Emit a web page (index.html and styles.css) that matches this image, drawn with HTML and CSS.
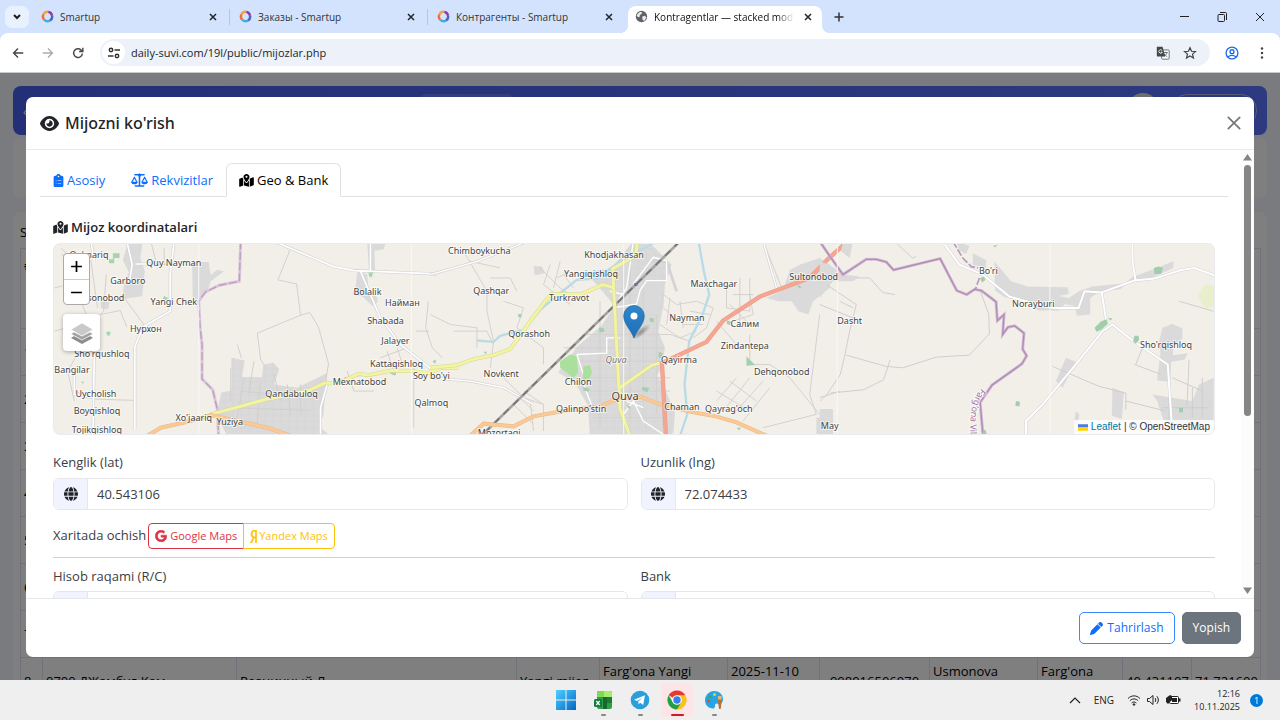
FILE: index.html
```html
<!DOCTYPE html>
<html lang="uz">
<head>
  <meta charset="UTF-8" />
  <meta name="viewport" content="width=device-width, initial-scale=1.0"/>
  <title>Kontragentlar — stacked modal</title>
  <link rel="stylesheet" href="styles.css">
</head>
<body>
  <svg class="sprite" aria-hidden="true">
    <defs>
      <symbol id="i-logo" viewBox="0 0 16 16">
        <g fill="none" stroke-width="3">
          <path d="M9 2.300A5.700 5.700 0 0 0 3 5.500" stroke="#f2a33a"/>
          <path d="M3 5.500A5.700 5.700 0 0 0 4 12" stroke="#ee6f3c"/>
          <path d="M4 12A5.700 5.700 0 0 0 11 13" stroke="#36b3d6"/>
          <path d="M11 13A5.700 5.700 0 0 0 13.600 7" stroke="#4a63c8"/>
          <path d="M13.600 7A5.700 5.700 0 0 0 9 2.300" stroke="#8a3fa0"/>
        </g>
      </symbol>
      <symbol id="i-x" viewBox="0 0 16 16"><path d="M4 4l8 8M12 4l-8 8" stroke="currentColor" fill="none"/></symbol>
      <symbol id="i-map" viewBox="0 0 576 512"><path fill="currentColor" d="M408 120c0 54.600-73.100 151.900-105.200 192c-7.700 9.600-22 9.600-29.600 0C241.100 271.900 168 174.600 168 120C168 53.700 221.700 0 288 0s120 53.700 120 120zm8 80.400c3.500-6.900 6.700-13.800 9.600-20.600c.5-1.200 1-2.500 1.500-3.700l116-46.400C558.900 123.400 576 135 576 152V422.800c0 9.800-6 18.600-15.100 22.300L416 503V200.400zM137.600 138.300c2.400 14.100 7.200 28.300 12.800 41.500c2.900 6.800 6.100 13.700 9.600 20.600V451.800L32.900 502.700C17.100 509 0 497.400 0 480.400V209.600c0-9.800 6-18.600 15.100-22.300l122.600-49zM327.800 332c13.900-17.400 35.700-45.700 56.200-77V504.300L192 449.400V255c20.500 31.300 42.300 59.600 56.200 77c20.500 25.600 59.100 25.600 79.600 0zM288 152a40 40 0 1 0 0-80 40 40 0 1 0 0 80z"/></symbol>
      <symbol id="i-globe" viewBox="0 0 512 512"><path fill="currentColor" d="M352 256c0 22.200-1.200 43.600-3.300 64H163.300c-2.200-20.400-3.300-41.800-3.300-64s1.200-43.600 3.300-64H348.700c2.200 20.400 3.300 41.800 3.300 64zm28.800-64H503.900c5.300 20.500 8.100 41.900 8.100 64s-2.800 43.500-8.100 64H380.800c2.100-20.600 3.200-42 3.200-64s-1.100-43.400-3.200-64zm112.600-32H376.700c-10-63.900-29.800-117.400-55.300-151.600c78.300 20.700 142 77.500 171.900 151.600zm-149.100 0H167.700c6.100-36.400 15.500-68.600 27-94.700c10.500-23.600 22.200-40.700 33.500-51.500C239.400 3.200 248.700 0 256 0s16.600 3.200 27.800 13.800c11.300 10.800 23 27.900 33.500 51.500c11.600 26 20.900 58.200 27 94.700zm-209 0H18.600C48.600 85.900 112.200 29.100 190.600 8.400C165.100 42.600 145.300 96.100 135.300 160zM8.100 192H131.200c-2.100 20.600-3.200 42-3.200 64s1.100 43.400 3.200 64H8.100C2.800 299.500 0 278.100 0 256s2.800-43.500 8.100-64zM194.700 446.600c-11.600-26-20.900-58.200-27-94.600H344.300c-6.100 36.400-15.500 68.600-27 94.600c-10.500 23.600-22.200 40.700-33.500 51.500C272.600 508.800 263.300 512 256 512s-16.600-3.200-27.800-13.800c-11.300-10.800-23-27.900-33.500-51.500zM135.300 352c10 63.900 29.800 117.400 55.300 151.600C112.200 482.900 48.600 426.100 18.600 352H135.300zm358.100 0c-30 74.100-93.600 130.900-171.900 151.600c25.500-34.200 45.200-87.700 55.300-151.600H493.400z"/></symbol>
    </defs>
  </svg>

  <!-- Brauzer -->
  <header class="browser">
    <div class="tab-strip">
      <button class="tab-search" aria-label="Search tabs"><svg width="10" height="10" viewBox="0 0 10 10"><path d="M2 3l3 3 3-3" fill="none" stroke="#1f1f1f" stroke-width="2"/></svg></button>
      <div class="tab">
        <svg class="favicon"><use href="#i-logo"/></svg><span class="tab-title">Smartup</span>
        <button class="tab-close" aria-label="Close"><svg><use href="#i-x"/></svg></button>
      </div>
      <div class="tab">
        <svg class="favicon"><use href="#i-logo"/></svg><span class="tab-title">Заказы - Smartup</span>
        <button class="tab-close" aria-label="Close"><svg><use href="#i-x"/></svg></button>
      </div>
      <div class="tab tab-last">
        <svg class="favicon"><use href="#i-logo"/></svg><span class="tab-title">Контрагенты - Smartup</span>
        <button class="tab-close" aria-label="Close"><svg><use href="#i-x"/></svg></button>
      </div>
      <div class="tab tab-active">
        <svg class="favicon" viewBox="0 0 16 16"><circle cx="8" cy="8" r="7" fill="#5f6368"/><path d="M3 5c2-3 5-3 6-2l-1 2-2 1v2L4 9 2 7zM9 8l3-1 2 2-2 4-2 0-1-2z" fill="#e8eaed"/></svg><span class="tab-title">Kontragentlar — stacked modal</span>
        <button class="tab-close" aria-label="Close"><svg><use href="#i-x"/></svg></button>
      </div>
      <button class="new-tab" aria-label="New tab"><svg width="12" height="12" viewBox="0 0 12 12"><path d="M6 1.500v9M1.500 6h9" stroke="#333" stroke-width="1.500"/></svg></button>
      <div class="window-controls">
        <button aria-label="Minimize"><svg viewBox="0 0 12 12"><path d="M2 5.500h9" stroke="#222"/></svg></button>
        <button aria-label="Restore"><svg viewBox="0 0 12 12" fill="none" stroke="#222"><rect x="2" y="3.500" width="6.500" height="7" rx="1"/><path d="M4 1.500h5.500a1 1 0 0 1 1 1V9"/></svg></button>
        <button aria-label="Close window"><svg viewBox="0 0 12 12"><path d="M2 2l8 8M10 2l-8 8" stroke="#222"/></svg></button>
      </div>
    </div>
    <div class="toolbar">
      <button class="tool" aria-label="Back"><svg viewBox="0 0 16 16"><path d="M14 8H3M8 3L3 8l5 5" fill="none" stroke="#444746" stroke-width="1.600"/></svg></button>
      <button class="tool" aria-label="Forward"><svg viewBox="0 0 16 16"><path d="M2 8h11M8 3l5 5-5 5" fill="none" stroke="#a9acaf" stroke-width="1.600"/></svg></button>
      <button class="tool" aria-label="Reload"><svg viewBox="0 0 16 16"><path d="M13 8.500A5 5 0 1 1 11.500 4.500L13 6M13.500 2v4.300H9.300" fill="none" stroke="#444746" stroke-width="1.600"/></svg></button>
      <div class="omnibox">
        <button class="site-info" aria-label="Site information"><svg width="12" height="12" viewBox="0 0 12 12" fill="none" stroke="#333" stroke-width="1.500"><circle cx="3" cy="3" r="1.700"/><path d="M6.500 3H12M0 9h5.500"/><circle cx="9" cy="9" r="1.700"/></svg></button>
        <input class="url" type="text" aria-label="Address" value="daily-suvi.com/19l/public/mijozlar.php">
        <button class="tool" aria-label="Translate"><svg viewBox="0 0 16 16"><rect x="6.500" y="4.500" width="8.500" height="10.500" rx="1" fill="#fff" stroke="#5f6368"/><path d="M8.500 7.500h5M11 6.500v1M12.500 7.500c-.5 2-2 3.500-3.500 4.500M9.500 9c.5 1.200 1.800 2.500 3.300 3" fill="none" stroke="#5f6368"/><path d="M1 1h6.500l3 11H2a1 1 0 0 1-1-1z" fill="#444746"/><path d="M7 5.200A2 2 0 1 0 7.200 7H5.500" fill="none" stroke="#fff"/></svg></button>
        <button class="tool" aria-label="Bookmark"><svg viewBox="0 0 16 16"><path d="M8 2l1.800 4 4.400.4-3.300 2.900 1 4.300L8 11.300l-3.900 2.300 1-4.300L1.800 6.400 6.200 6z" fill="none" stroke="#444746" stroke-width="1.400"/></svg></button>
      </div>
      <button class="tool" aria-label="Profile"><svg viewBox="0 0 16 16" fill="none" stroke="#1a6ce8" stroke-width="1.500"><circle cx="8" cy="8" r="6.700"/><circle cx="8" cy="6.500" r="2.200"/><path d="M3.500 12.500c2.500-2.300 6.500-2.300 9 0"/></svg></button>
      <button class="tool" aria-label="Menu"><svg viewBox="0 0 16 16" fill="#444746"><circle cx="8" cy="3" r="1.400"/><circle cx="8" cy="8" r="1.400"/><circle cx="8" cy="13" r="1.400"/></svg></button>
    </div>
  </header>

  <div class="page">
    <nav class="site-nav">
      <span class="nav-brand">‹</span>
      <span class="nav-chip"></span>
      <span class="nav-avatar"></span>
      <span class="nav-user"></span>
    </nav>
    <section class="card filter-card"></section>
    <section class="card table-card">
      <div class="table-caption">Sahifada</div>
      <table class="clients">
        <colgroup>
          <col class="c-num"><col class="c-name"><col class="c-firm"><col class="c-type"><col class="c-region"><col class="c-date"><col class="c-phone"><col class="c-agent"><col class="c-city"><col class="c-lat"><col class="c-lng">
        </colgroup>
        <thead><tr><th>#</th><th></th><th></th><th></th><th></th><th></th><th></th><th></th><th></th><th></th><th></th></tr></thead>
        <tbody>
          <tr><td>1</td><td></td><td></td><td></td><td></td><td></td><td></td><td></td><td></td><td></td><td></td></tr>
          <tr><td>2</td><td></td><td></td><td></td><td></td><td></td><td></td><td></td><td></td><td></td><td></td></tr>
          <tr><td>3</td><td></td><td></td><td></td><td></td><td></td><td></td><td></td><td></td><td></td><td></td></tr>
          <tr><td>4</td><td></td><td></td><td></td><td></td><td></td><td></td><td></td><td></td><td></td><td></td></tr>
          <tr><td>5</td><td></td><td></td><td></td><td></td><td></td><td></td><td></td><td></td><td></td><td></td></tr>
          <tr><td>6</td><td></td><td></td><td></td><td></td><td></td><td></td><td></td><td></td><td></td><td></td></tr>
          <tr><td>7</td><td></td><td></td><td></td><td></td><td></td><td></td><td></td><td></td><td></td><td></td></tr>
          <tr><td>8</td><td>0700 ДЖамбул Кам</td><td>Розничный Л</td><td>Yangi mijoz</td><td>Farg'ona Yangi<br>bozor</td><td>2025-11-10<br>11:40</td><td class="mid">998916506970</td><td>Usmonova<br>Nigora</td><td>Farg'ona<br>shahri</td><td class="mid">40.431107</td><td class="mid">71.721600</td></tr>
        </tbody>
      </table>
    </section>

    <!-- Mijozni ko'rish oynasi -->
    <div class="modal-backdrop">
      <div class="modal" role="dialog" aria-labelledby="modalTitle">
        <div class="modal-header">
          <svg class="eye" viewBox="0 0 576 512"><path fill="currentColor" d="M288 32c-80.800 0-145.500 36.800-192.600 80.600C48.600 156 17.300 208 2.500 243.700c-3.300 7.900-3.300 16.700 0 24.600C17.300 304 48.600 356 95.400 399.400C142.500 443.200 207.200 480 288 480s145.500-36.800 192.600-80.600c46.800-43.500 78.100-95.400 93-131.100c3.300-7.900 3.300-16.700 0-24.600c-14.900-35.700-46.200-87.700-93-131.100C433.500 68.800 368.800 32 288 32zM144 256a144 144 0 1 1 288 0 144 144 0 1 1 -288 0zm144-64c0 35.300-28.700 64-64 64c-7.100 0-13.900-1.200-20.300-3.300c-5.500-1.800-11.900 1.600-11.700 7.400c.3 6.900 1.300 13.800 3.200 20.700c13.700 51.200 66.400 81.600 117.600 67.900s81.600-66.400 67.900-117.600c-11.100-41.500-47.800-69.400-88.600-71.100c-5.800-.2-9.200 6.100-7.400 11.700c2.100 6.400 3.300 13.200 3.300 20.300z"/></svg>
          <h5 class="modal-title" id="modalTitle">Mijozni ko'rish</h5>
          <button class="modal-close" aria-label="Yopish"><svg viewBox="0 0 16 16"><path d="M1.500 1.500l13 13M14.500 1.500l-13 13" stroke="#777" stroke-width="2" stroke-linecap="round"/></svg></button>
        </div>

        <div class="modal-main">
          <div class="modal-body">
            <div class="nav-tabs" role="tablist">
              <button class="nav-tab" role="tab">
                <svg class="ic-clip" viewBox="0 0 384 512"><path fill="currentColor" fill-rule="evenodd" d="M192 0c-42 0-77 27-91 64H64C29 64 0 93 0 128v320c0 35 29 64 64 64h256c35 0 64-29 64-64V128c0-35-29-64-64-64h-37C269 27 234 0 192 0zm0 64a32 32 0 1 1 0 64 32 32 0 1 1 0-64zM84 256h28v28H84zM160 256h140v24H160zM84 350h28v28H84zM160 350h140v24H160z"/></svg>
                Asosiy
              </button>
              <button class="nav-tab" role="tab">
                <svg class="ic-scale" viewBox="0 0 640 512"><g fill="none" stroke="currentColor" stroke-width="60" stroke-linecap="round" stroke-linejoin="round"><path d="M150 60H490M320 40V475M165 480H475"/><path d="M128 150L40 320M128 150L216 320M512 150L424 320M512 150L600 320" stroke-width="44"/></g><path fill="currentColor" d="M0 320h256c-8 60-58 98-128 98S8 380 0 320zM384 320h256c-8 60-58 98-128 98s-120-38-128-98z"/><circle cx="320" cy="72" r="62" fill="currentColor"/></svg>
                Rekvizitlar
              </button>
              <button class="nav-tab nav-tab-active" role="tab" aria-selected="true">
                <svg class="ic-map"><use href="#i-map"/></svg>
                Geo &amp; Bank
              </button>
            </div>

            <div class="tab-pane">
              <h6 class="section-title"><svg class="ic-map"><use href="#i-map"/></svg>Mijoz koordinatalari</h6>

              <div class="map">
                <svg class="map-tiles" viewBox="0 0 3486 573" preserveAspectRatio="xMidYMid slice">
                  <defs>
                    <pattern id="blocks" width="24" height="20" patternUnits="userSpaceOnUse"><rect width="24" height="20" fill="#dadada"/><path d="M0 0H24M0 0V20" stroke="#d0d0d0" stroke-width="2"/></pattern>
                  </defs>
                  <!-- g'arbiy qism -->
                  <g transform="translate(-39 -27)">
                    <g fill="#dadadb">
                      <path d="M262 20h44l-8 50 14 40-8 75-60 8 6-50 14-30-18-36z"/>
                      <path d="M454 82h50l6 40 18-16 22 4-40 30-12 36-30 22-12-10z"/>
                      <path d="M980 20h56l-6 24-28 4 2 66h-18zM950 112l30 6 4 44 26 26 2 14-16 12-30-28-30-6 10-26z"/>
                      <path d="M178 200h28l-4 24-22-2z"/>
                    </g>
                    <path fill="url(#blocks)" d="M572 370l40 8-8 50 60 0 4-36 30-8 18 20-16 46 70 10 90-44-12 130-14 28 34 30H560l-34-60 16-70 30-6z"/>
                    <g fill="none" stroke="#d3d0ce" stroke-width="3">
                      <path d="M748 46l-36 90 56 12 12 94-130 54 10 80 14 20M780 242l28-8 26 44 30 110-10 60"/>
                      <path d="M250 190l62 84M330 20l18 70 40 0M370 40v50M196 120l-8 110-10 10 60-12 20 50M60 40l60 60-20 50 40 100-20 90-40 70 20 90M40 290l60-18M40 160l40-10M100 470l60 24 120 4M60 60l90 20 20 140"/>
                      <path d="M640 380l-16 100M590 330l12 40M700 420l20 80M610 430l-20 120M660 440l-10 130M570 400l0 100M740 450l10 90M780 450v90M560 520l250 8M600 470l200 20"/>
                      <path d="M1020 370l80-30M1030 400l60-20M1040 350l20 60M1070 340l20 60M1126 290h40M1164 200l-8 80 20 60 30 30M920 410l20 60 60 0M910 430l80 -10M1120 400v180"/>
                    </g>
                    <path fill="none" stroke="#d3d3d5" stroke-width="9" d="M700 20l180 76 60 12 250 10M990 20v90M400 20l-12 100 0 110-80 46-26 60 0 250M284 88l50 0M258 20l16 70-10 60M150 20l10 60M960 110l30 70 30 70 60 80 100 80M860 450l-20 70 0 80M160 360l-4 240M100 400v80l60 10"/>
                    <path fill="none" stroke="#fff" stroke-width="5" d="M700 20l180 76 60 12 250 10M990 20v90M400 20l-12 100 0 110-80 46-26 60 0 250M284 88l50 0M258 20l16 70-10 60M150 20l10 60M960 110l30 70 30 70 60 80 100 80M860 450l-20 70 0 80M160 360l-4 240M100 400v80l60 10"/>
                    <g fill="#a5d5ae"><path d="M216 56h20v14h-16v16h-16V74h12zM370 184l12 6-6 8-10-6zM196 292l14 0-4 12-8-2zM984 114l14 0-4 14-8-2zM120 442l10 0-4 6zM1050 410l18 4-4 10-14-6zM1178 380l10-2-4 10z"/></g>
                    <path d="M600 20l-4 120-60 12-42 20-20 28 4 80 6 50 0 104 32 32 14 60 4 90" fill="none" stroke="#dcc8dc" stroke-width="9"/>
                    <path d="M600 20l-4 120-60 12-42 20-20 28 4 80 6 50 0 104 32 32 14 60 4 90" fill="none" stroke="#bd9ec1" stroke-width="4" stroke-dasharray="24 8"/>
                    <path d="M510 540l170-46 120-24 52-24 40 2 62-30 30 4 70-14 60 2 50 6 40-16h50" fill="none" stroke="#d6d69c" stroke-width="12"/>
                    <path d="M510 540l170-46 120-24 52-24 40 2 62-30 30 4 70-14 60 2 50 6 40-16h50" fill="none" stroke="#f3f4a2" stroke-width="9"/>
                    <path d="M320 604l40-24 80-18 70-20 90 20 80 18 70 24" fill="none" stroke="#e8b98a" stroke-width="12"/>
                    <path d="M320 604l40-24 80-18 70-20 90 20 80 18 70 24" fill="none" stroke="#fac994" stroke-width="9"/>
                  </g>
                  <!-- Quva shahri -->
                  <g transform="translate(1131 -27)">
                    <path fill="url(#blocks)" d="M545 100l60-75 60 5 60 60-20 60-4 60-16 80 20 50-10 60-14 24 20 30 34 80-4 60-20 20H480l-6-100-40-70-50-30 60-80 70-60 40-60-50-60-40-40 60-10z"/>
                    <g fill="#dadadb">
                      <path d="M1010 190l50-24 20-60 30-16 60-20 30 20v70l-50 40-14 40-30-10-20-30-40 0z"/>
                      <path d="M1160 550h50v50h-50zM310 95l24 0 10 20-30 8zM640 150l60 10-20 80-40-20z"/>
                    </g>
                    <g fill="none" stroke="#d4d1cf" stroke-width="3">
                      <path d="M100 50l70 120 0 60 20 90-10 80M0 240l60 30 80 10 0 60M70 290l100 0 20 40M180 130l60 0 20 40M330 100l60 60 60 40M360 90l-20 60 80 60M390 80l-20 80M220 200l60 20-20 60M260 280l80 60 0 50M120 80l90 20M220 430l60 60 60 20 0 80M270 490l40 40M250 510l60 60M280 470l60 40M300 500l10 90M380 130l40 -20M400 120l30 40"/>
                      <path d="M700 180l40 30 60-10 50 20-20 60-40 30M700 220l60 50 60 0M720 190l-10 80M750 200l10 80M780 230l60 10M690 270l60 40 50-20M720 300l60 20M890 160l0 60 70 10 0-100M910 180h60M900 210l60 60M930 130v150M960 300v80M960 390l60 0 60 40 90 110M860 470l100 60M900 440l80 60M860 500l60-70M880 530l80-100M910 540l90-100M940 560l80-100M1000 20l60 150M1170 240l-30 240 20 60-160 40M960 180l10 60-60 20M860 260l60 70"/>
                      <path d="M510 200v380M600 60v500M640 100v460M680 240v300M460 300h260M400 340h300M420 380h280M480 430h240M480 470h240M490 550h210"/>
                    </g>
                    <path fill="none" stroke="#d4d3d3" stroke-width="8" d="M0 120l140-40 140-55M0 430l120 10 100 20 90 50M1000 20l40 140M660 80l50 0 30 90"/>
                    <path fill="none" stroke="#fff" stroke-width="4" d="M0 120l140-40 140-55M0 430l120 10 100 20 90 50M1000 20l40 140M610 20l-20 140-40 60 70-12 10-40 20-30 60 0 0 -60 -40-10-60 80M440 360l90-4 0-46h40M440 360l20 60 4 40 20 50M580 540l30-40 30 60 60 40M590 500l50 20M540 170l40 10"/>
                    <g fill="none" stroke="#b8dbe6"><path stroke-width="7" d="M140 318l50 4 20-18 70-18 50-60 60-50 50-40 60-4 80-60 90-46"/><path stroke-width="7" d="M806 20l16 90 16 70-20 60-40 80-14 130 8 90-20 60"/></g>
                    <path fill="#aadf9c" d="M390 380l30-20 20 6 4 50-14 14-40-30zM460 396l20-4 6 24-14 24-14-4z"/>
                    <g fill="#a5d0b0"><path d="M264 238h10v10h-10zM506 280l14 0 4 12-16 2zM658 250l14 2-2 12-10-2zM892 258l14 4-6 10-10-4zM950 366l26 26-26 2zM636 458l22 2-6 14-16-8zM1102 148l14 10-8 4zM460 458l20 6-6 8-14-4zM160 352l10 0-4 8zM6 380l10-4-2 10zM590 510l12 8-6 6zM686 352l12 4-4 16-8-2zM920 580l14 0-6 8z"/></g>
                    <path d="M750 20L154 604" stroke="#a5a4a3" stroke-width="8"/><path d="M750 20L154 604" stroke="#747474" stroke-width="5" stroke-dasharray="22 18"/>
                    <g fill="none" stroke="#d6d69c" stroke-width="12"><path d="M0 400l80-8 50-18 60-12 50-18 22-30 50-70 50-66 90 2 66-30 34 10"/><path d="M622 20l-4 40-20 14-50 28 6 120 16 300 30 84M566 462l100-70 24-6"/></g>
                    <g fill="none" stroke="#f3f4a2" stroke-width="9"><path d="M0 400l80-8 50-18 60-12 50-18 22-30 50-70 50-66 90 2 66-30 34 10"/><path d="M622 20l-4 40-20 14-50 28 6 120 16 300 30 84M566 462l100-70 24-6"/></g>
                    <path fill="none" stroke="#e8b98a" stroke-width="12" d="M120 604l40-36 90 8 60-30 90-16 110-14 60-26 60-4 60 24 100 24 60 10 70 20 90 40"/>
                    <path fill="none" stroke="#fac994" stroke-width="9" d="M120 604l40-36 90 8 60-30 90-16 110-14 60-26 60-4 60 24 100 24 60 10 70 20 90 40"/>
                    <path fill="none" stroke="#e5a08e" stroke-width="13" d="M1254 20l-60 54-54 56-150 56-110 72-50 64-134 64 12 218"/>
                    <path fill="none" stroke="#f5a590" stroke-width="10" d="M1254 20l-60 54-54 56-150 56-110 72-50 64-134 64 12 218"/>
                    <rect x="613" y="145" width="9" height="9" fill="#6a6ac0"/>
                  </g>
                  <!-- sharqiy qism -->
                  <g transform="translate(2301 -27)">
                    <g fill="#dadadb">
                      <path d="M70 20h30l-10 50-26-20zM0 80l30 10 40 30 50 6-20 14-60 0-40 50z"/>
                      <path d="M525 80l50 60 50 16 120 2 4 20-30 6 30 6 30-20 40-14 100-10 20-18 80-30 44-18 0 20-80 36-60 10-20 18-60 6-30 20 0 50-40 4-6-30-30-6-20 20-60 0-40-30-60-10-30-20zM410 20l40 14-10 24-20-10zM460 56l40 20 0 24-40-10z"/>
                      <path d="M1020 320l10-40 30-12 30 14 0 30-28 20 0 30 44-6-10 20-40 6-2 60-40-4 10-80zM740 370l30 12-40 78-20-20zM880 460l34 14-6 80-30-10zM1000 480l60 10 60 10 20-50 44-20v130l-80 20-70-20-20-60zM0 524l40 0 0 70-40 0zM770 530l10 10-4 30-12-4z"/>
                    </g>
                    <g fill="none" stroke="#d0cecc" stroke-width="3">
                      <path d="M20 150l90 60-20 80-16 80-12 50-40 60-20 20M0 210l100 40M60 200l40 20M80 362l120 34 50 4 100-32 100-6 60-64-2-60-26-70M110 130l40 0 40 44 36 6M212 376l-20 60-60 30-100 10M230 25l50 46 10-6M0 490l60-20"/>
                      <path d="M700 396l140 60 80 20 0 50M920 500l120 30M950 390l20-50M946 390l80 30M1110 376l-6 140M1060 430l90 40M1080 200l104 30M1030 520h140M1050 490v80M1120 460v90M1150 430v120"/>
                    </g>
                    <path fill="none" stroke="#d3d3d5" stroke-width="9" d="M376 30l44 60 70 30 80 66 70 20 60 14h78l18-50 50 4 100-36 60-6 80-26 40-6 60 22M940 20l0 60 10 60M848 176l14 90M620 600l0-40 50-50 100-120 80-100 30-20 50 40 116 80 14 210"/>
                    <path fill="none" stroke="#fff" stroke-width="6" d="M376 30l44 60 70 30 80 66 70 20 60 14h78l18-50 50 4 100-36 60-6 80-26 40-6 60 22M940 20l0 60 10 60M848 176l14 90M620 600l0-40 50-50 100-120 80-100 30-20 50 40 116 80 14 210"/>
                    <g fill="#a0cdab"><path d="M826 280l20-20 16-6 4 14-20 18-14 6zM866 250l14 2-6 6zM946 304l12 0 2 12-10 12-8-8zM1004 100l14-4 14 4-6 18-20 0zM482 130l12-4 4 10-10 8zM590 500l12 2-2 14-12-2zM520 34l14-4-6 8zM1080 520h12v14h-12zM484 590l14-4 4 12-14 4z"/></g>
                    <path fill="#e9efcc" d="M1134 186l24-36 40 6v60l-40 4z"/>
                    <path fill="none" stroke="#d3bad4" stroke-width="9" d="M0 20l30 44 40 56 70-46 30 0 30 8 22 24 140-34 50 96 30 12 24-16 20 4 44 34 4 56 20-18-4 60 16-22 20-4 28 22-4 48 12 20-14 24-90 64-36 52 8 90"/>
                    <path fill="none" stroke="#b08eb4" stroke-width="4" d="M0 20l30 44 40 56 70-46 30 0 30 8 22 24 140-34 50 96 30 12 24-16 20 4 44 34 4 56 20-18-4 60 16-22 20-4 28 22-4 48 12 20-14 24-90 64-36 52 8 90"/>
                    <path fill="none" stroke="#b999bd" stroke-width="5" stroke-dasharray="22 6" d="M400 20l30 50 26 26 20 4M480 130l-12 34"/>
                  </g>
                  <path stroke="#f9f8f5" stroke-width="3" d="M435 0V573M1074 0V573M1712 0V573M2354 0V573M2993 0V573"/>
                </svg>
                <svg class="map-labels" viewBox="0 0 1162 191" preserveAspectRatio="xMidYMid slice">
                  <path id="border-label" d="M929 145Q914 160 919 205" fill="none"/>
                  <text x="35" y="14">Qo'mariq</text><text x="120" y="22">Quy Nayman</text><text x="74" y="40">Garboro</text>
                  <text x="46" y="57">Hasonobod</text><text x="120" y="61">Yangi Chek</text><text x="92" y="88">Нурхон</text>
                  <text x="48" y="114">Sho'rqushloq</text><text x="18" y="130">Bangilar</text><text x="42" y="154">Uycholish</text>
                  <text x="43" y="171">Boyqishloq</text><text x="43" y="190">Tojikqishloq</text><text x="140" y="178">Xo'jaariq</text>
                  <text x="176" y="182">Yuziya</text><text x="238" y="154">Qandabuloq</text><text x="306" y="142">Mexnatobod</text>
                  <text x="343" y="124">Kattaqishloq</text><text x="314" y="51">Bolalik</text><text x="349" y="62">Найман</text>
                  <text x="332" y="80">Shabada</text><text x="342" y="101">Jalayer</text><text x="378" y="136">Soy bo'yi</text>
                  <text x="378" y="163">Qalmoq</text><text x="426" y="10">Chimboykucha</text><text x="561" y="14">Khodjakhasan</text>
                  <text x="538" y="33">Yangiqishloq</text><text x="516" y="57">Turkravot</text><text x="438" y="50">Qashqar</text>
                  <text x="476" y="94">Qorashoh</text><text x="448" y="134">Novkent</text><text x="525" y="142">Chilon</text>
                  <text x="563" y="120" class="district">Quva</text><text x="572" y="157" class="city">Quva</text>
                  <text x="528" y="169">Qalinpo'stin</text><text x="446" y="193">Mozortagi</text><text x="661" y="43">Maxchagar</text>
                  <text x="634" y="77">Nayman</text><text x="692" y="83">Салим</text><text x="692" y="106">Zindantepa</text>
                  <text x="626" y="120">Qayirma</text><text x="729" y="132">Dehqonobod</text><text x="629" y="167">Chaman</text>
                  <text x="676" y="169">Qayrag'och</text><text x="777" y="186">May</text><text x="761" y="36">Sultonobod</text>
                  <text x="797" y="80">Dasht</text><text x="936" y="30">Bo'ri</text><text x="981" y="63">Norayburi</text>
                  <text x="1114" y="105">Sho'rqishloq</text>
                  <text class="region"><textPath href="#border-label">Farg'ona Viloyati</textPath></text>
                </svg>
                <svg class="map-pin" viewBox="0 0 34 34">
                  <defs><linearGradient id="pin" x1="0" y1="0" x2="0" y2="1"><stop offset="0" stop-color="#2e86cb"/><stop offset="1" stop-color="#1f6fb5"/></linearGradient><radialGradient id="pin-shadow"><stop offset="0" stop-color="#000" stop-opacity=".35"/><stop offset="1" stop-color="#000" stop-opacity="0"/></radialGradient></defs>
                  <ellipse cx="18" cy="27" rx="12" ry="4" fill="url(#pin-shadow)" transform="rotate(-38 18 27)"/>
                  <path d="M11 33C8 25 .7 19 .7 10.800A10.300 10.300 0 0 1 21.300 10.800C21.300 19 14 25 11 33z" fill="url(#pin)" stroke="#2668a4" stroke-width=".7"/>
                  <circle cx="11" cy="11" r="3.500" fill="#fff"/>
                </svg>
                <div class="map-controls">
                  <div class="map-zoom">
                    <button aria-label="Zoom in"><svg viewBox="0 0 12 12"><path d="M6 1v10M1 6h10" stroke="#000" stroke-width="1.600"/></svg></button>
                    <button aria-label="Zoom out"><svg viewBox="0 0 12 12"><path d="M1 6h10" stroke="#000" stroke-width="1.600"/></svg></button>
                  </div>
                  <button class="map-layers" aria-label="Layers"><svg viewBox="0 0 26 26"><path d="M2 18l11 6 11-6-3-2-8 4-8-4z" fill="#8d8d8d"/><path d="M2 14l11 6 11-6-3-2-8 4-8-4z" fill="#a3a3a3" stroke="#fff" stroke-width=".6"/><path d="M13 3L2 9.500 13 16l11-6.500z" fill="#c9c9c9" stroke="#fff" stroke-width=".6"/></svg></button>
                </div>
                <div class="map-credit"><svg width="10" height="7" viewBox="0 0 12 8"><path fill="#4c7be1" d="M0 0h12v4H0z"/><path fill="#ffd500" d="M0 4h12v4H0z"/></svg> <a href="#">Leaflet</a> | © OpenStreetMap</div>
              </div>

              <div class="form-row">
                <div class="field">
                  <label for="lat">Kenglik (lat)</label>
                  <div class="input-group"><span class="addon"><svg class="ic-globe"><use href="#i-globe"/></svg></span><input id="lat" type="text" value="40.543106"></div>
                </div>
                <div class="field">
                  <label for="lng">Uzunlik (lng)</label>
                  <div class="input-group"><span class="addon"><svg class="ic-globe"><use href="#i-globe"/></svg></span><input id="lng" type="text" value="72.074433"></div>
                </div>
              </div>

              <div class="open-map">
                <span class="open-label">Xaritada ochish</span>
                <div class="btn-group">
                  <button class="btn-map btn-google"><svg class="ic-google" viewBox="0 0 488 512"><path fill="currentColor" stroke="currentColor" stroke-width="24" d="M488 261.800C488 403.300 391.100 504 248 504 110.800 504 0 393.200 0 256S110.800 8 248 8c66.800 0 123 24.500 166.300 64.900l-67.500 64.900C258.500 52.600 94.300 116.600 94.300 256c0 86.500 69.100 156.600 153.700 156.600 98.200 0 135-70.400 140.800-106.900H248v-85.300h236.100c2.300 12.700 3.900 24.900 3.900 41.400z"/></svg>Google Maps</button>
                  <button class="btn-map btn-yandex"><svg class="ic-yandex" viewBox="0 0 256 512"><path fill="currentColor" stroke="currentColor" stroke-width="16" d="M153.100 315.800L65.700 512H2l96-209.800c-45.100-22.900-75.200-64.400-75.200-141.100C22.700 53.700 90.800 0 171.700 0H254v512h-55.100V315.800h-45.800zm45.800-269.300h-29.400c-44.400 0-87.400 29.400-87.400 114.600 0 82.300 39.400 108.800 87.400 108.800h29.400V46.500z"/></svg>Yandex Maps</button>
                </div>
              </div>

              <hr class="divider">

              <div class="form-row">
                <div class="field">
                  <label for="account">Hisob raqami (R/C)</label>
                  <div class="input-group"><span class="addon"></span><input id="account" type="text"></div>
                </div>
                <div class="field">
                  <label for="bank">Bank</label>
                  <div class="input-group"><span class="addon"></span><input id="bank" type="text"></div>
                </div>
              </div>
            </div>
          </div>
          <div class="scrollbar">
            <svg width="9" height="7" viewBox="0 0 9 7"><path d="M4.500 0L9 6.500H0z" fill="#858585"/></svg>
            <div class="scroll-track"><div class="scroll-thumb"></div></div>
            <svg width="9" height="7" viewBox="0 0 9 7"><path d="M4.500 7L9 .5H0z" fill="#858585"/></svg>
          </div>
        </div>

        <div class="modal-footer">
          <button class="btn btn-outline"><svg class="ic-pen" viewBox="0 0 512 512"><path fill="currentColor" d="M362.700 19.300L314.300 67.700 444.300 197.700l48.400-48.400c25-25 25-65.500 0-90.500L453.300 19.300c-25-25-65.500-25-90.500 0zm-71 71L58.600 323.500c-10.400 10.400-18 23.300-22.200 37.400L1 481.200C-1.500 489.700 .8 498.800 7 505s15.300 8.500 23.700 6.100l120.300-35.400c14.100-4.200 27-11.800 37.400-22.200L421.700 220.300 291.700 90.300z"/></svg>Tahrirlash</button>
          <button class="btn btn-secondary">Yopish</button>
        </div>
      </div>
    </div>
  </div>

  <!-- Vazifalar paneli -->
  <footer class="taskbar">
    <div class="apps">
      <button class="app" aria-label="Start"><svg viewBox="0 0 20 20"><defs><linearGradient id="win" x1="0" y1="0" x2="1" y2="1"><stop offset="0" stop-color="#4fd0ff"/><stop offset="1" stop-color="#0067c8"/></linearGradient></defs><path fill="url(#win)" d="M0 0h9.500v9.500H0zM10.500 0H20v9.500h-9.500zM0 10.500h9.500V20H0zM10.500 10.500H20V20h-9.500z"/></svg></button>
      <button class="app app-open" aria-label="Excel"><svg viewBox="0 0 20 20"><rect x="4" y="1" width="15" height="18" rx="2" fill="#2f9e44"/><path d="M4 3a2 2 0 0 1 2-2h5v6H4z" fill="#7fd957"/><path d="M11 1h6a2 2 0 0 1 2 2v4h-8z" fill="#a6ec6d"/><path d="M10 7h9v6h-9z" fill="#1f7a36"/><path d="M10 7h4v12h-4z" fill="#186a2c"/><rect x="1" y="9" width="8" height="8" rx="1.500" fill="#107c41"/><path d="M3.300 11l3.400 4M6.700 11l-3.400 4" stroke="#fff" stroke-width="1.200"/></svg></button>
      <button class="app app-open" aria-label="Telegram"><svg viewBox="0 0 20 20"><circle cx="10" cy="10" r="9.300" fill="#2a9fdc"/><path d="M4 9.800l11-4.600-1.800 9.700-3-2.200-1.600 1.600-.4-2.800 4.200-3.800-5.300 3.300z" fill="#fff"/></svg></button>
      <button class="app app-open app-current" aria-label="Chrome"><svg viewBox="0 0 20 20"><path d="M10 10L1.700 5.200A9.600 9.600 0 0 1 18.300 5.200z" fill="#e33b2e"/><path d="M10 10V5.200h8.300A9.600 9.600 0 0 1 10 19.600z" fill="#fbc116"/><path d="M10 19.600A9.600 9.600 0 0 1 1.700 5.200L5.900 12.400 10 10l4.100 2.400z" fill="#269f42"/><circle cx="10" cy="10" r="4.800" fill="#fff"/><circle cx="10" cy="10" r="3.700" fill="#3b7ded"/></svg></button>
      <button class="app app-open" aria-label="Paint"><svg viewBox="0 0 20 20"><path d="M10 1c5 0 9 3.500 9 8s-3 6-5 5-3 0-3 2-1 2.500-2 2.500C4 18.500 1 14.500 1 10s4-9 9-9z" fill="#26a5e4"/><circle cx="10.500" cy="4.500" r="1.500" fill="#ffc62b"/><circle cx="5.800" cy="6.800" r="1.500" fill="#3aa655"/><circle cx="4.500" cy="11" r="1.500" fill="#e2483b"/><path d="M14.200 6h3.200l.3 5-1 8h-1.600l-1.200-8z" fill="#b57139"/><path d="M14 6h3.600v3.500H14z" fill="#e7b77a"/></svg></button>
    </div>
    <div class="tray">
      <svg width="12" height="12" viewBox="0 0 12 12"><path d="M1 9l5-5 5 5" fill="none" stroke="#222" stroke-width="1.200"/></svg>
      <span class="lang">ENG</span>
      <div class="tray-icons">
        <svg width="14" height="14" viewBox="0 0 14 14" fill="none" stroke="#222"><path d="M1 5.500c3.500-3.500 8.500-3.500 12 0M2.800 7.800c2.500-2.500 5.900-2.500 8.400 0M4.600 10c1.500-1.400 3.300-1.400 4.800 0"/><circle cx="7" cy="11.500" r=".8" fill="#222"/></svg>
        <svg width="14" height="14" viewBox="0 0 14 14" fill="none" stroke="#222"><path d="M1.500 5.500h2L7 2.500v9l-3.500-3h-2zM9 5c1 1.200 1 2.800 0 4M10.800 3.200c2 2.200 2 5.400 0 7.600"/></svg>
        <svg width="16" height="14" viewBox="0 0 16 14"><rect x="4.500" y="3.500" width="9" height="7" rx="1" fill="#fff" stroke="#222"/><path d="M7 5h5v4H7zM14 5.500h1.500v3H14zM5 2L1 5v4l2 2 4-4V3z" fill="#222"/></svg>
      </div>
      <div class="clock"><span>12:16</span><span>10.11.2025</span></div>
      <span class="badge">1</span>
    </div>
  </footer>
</body>
</html>
```

FILE: styles.css
```css
* {
  box-sizing: border-box;
}

body {
  margin: 0;
  height: 100vh;
  display: flex;
  flex-direction: column;
  overflow: hidden;
  font-family: "Open Sans", "Noto Sans", sans-serif;
  font-size: 13px;
  line-height: 20px;
  color: #212529;
}

button,
input {
  font: inherit;
  color: inherit;
}

button {
  display: flex;
  align-items: center;
  justify-content: center;
  padding: 0;
  border: none;
  background: transparent;
  cursor: pointer;
}

svg {
  display: block;
  flex: none;
}

.sprite {
  position: absolute;
  width: 0;
  height: 0;
}

/* browser */
.browser {
  background-color: #d3e3fd;
  font-size: 11px;
}

.tab-strip {
  display: flex;
  align-items: center;
  height: 33px;
}

.tab-search {
  width: 24px;
  height: 22px;
  margin: 0 3px 0 5px;
  border-radius: 7px;
  background-color: #e9f1fe;
}

.tab {
  position: relative;
  display: flex;
  align-items: center;
  width: 198px;
  height: 16px;
  padding: 0 10px 0 9px;
  border-right: 1px solid #a8c7fa;
}

.tab-last {
  border-right-color: transparent;
}

.favicon {
  width: 13px;
  height: 13px;
  margin-right: 6px;
}

.tab-title {
  flex: 1;
  min-width: 0;
  overflow: hidden;
  white-space: nowrap;
  font-size: 10px;
  color: #333;
}

.tab-close {
  margin-left: 8px;
}

.tab-close svg {
  width: 12px;
  height: 12px;
  stroke-width: 2;
}

.tab-active {
  width: 194px;
  height: 27px;
  margin: 6px 2px 0;
  padding: 0 8px 6px 7px;
  border: none;
  border-radius: 8px 8px 0 0;
  background-color: #fff;
}

.tab-active .tab-title {
  color: #111;
  -webkit-mask-image: linear-gradient(to right, #000 88%, transparent);
  mask-image: linear-gradient(to right, #000 88%, transparent);
}

.tab-active::before,
.tab-active::after {
  content: "";
  position: absolute;
  bottom: 0;
  width: 8px;
  height: 8px;
}

.tab-active::before {
  left: -8px;
  background: radial-gradient(circle at 0 0, transparent 8px, #fff 8px);
}

.tab-active::after {
  right: -8px;
  background: radial-gradient(circle at 100% 0, transparent 8px, #fff 8px);
}

.new-tab {
  margin-left: 9px;
}

.window-controls {
  display: flex;
  gap: 26px;
  margin-left: auto;
  padding-right: 14px;
}

.window-controls svg {
  width: 12px;
  height: 12px;
}

.toolbar {
  display: flex;
  align-items: center;
  gap: 14px;
  height: 40px;
  padding: 0 10px;
  border-bottom: 1px solid #c9cace;
  border-radius: 8px 8px 0 0;
  background-color: #fff;
}

.tool svg {
  width: 16px;
  height: 16px;
  transform: scale(0.88);
}

.omnibox {
  flex: 1;
  display: flex;
  align-items: center;
  gap: 11px;
  height: 27px;
  padding: 0 12px 0 2px;
  border-radius: 14px;
  background-color: #ecf1fa;
}

.site-info {
  width: 23px;
  height: 23px;
  border-radius: 50%;
  background-color: #fff;
}

.url {
  flex: 1;
  min-width: 0;
  padding: 0;
  margin-left: -5px;
  border: none;
  background: transparent;
  outline: none;
}

/* page behind the modal */
.page {
  position: relative;
  flex: 1;
  min-height: 0;
  overflow: hidden;
  padding: 13px;
  background-color: #f4f6ff;
  color: #000;
}

.site-nav {
  display: flex;
  align-items: center;
  gap: 12px;
  height: 49px;
  padding: 0 10px;
  border-radius: 8px;
  background-image: linear-gradient(to right, #465eee, #5a74ff);
}

.nav-brand {
  color: #fff;
}

.nav-chip {
  width: 95px;
  height: 33px;
  margin-left: 380px;
  border-radius: 7px;
  background-color: rgba(255, 255, 255, 0.15);
}

.nav-avatar {
  width: 32px;
  height: 35px;
  margin-left: auto;
  border-radius: 50%;
  background-color: #ddd;
}

.nav-user {
  width: 86px;
  height: 33px;
  border: 1px solid #a9b4ee;
  border-radius: 16px;
}

.card {
  border-radius: 8px;
  background-color: #fff;
}

.filter-card {
  height: 60px;
  margin-top: 3px;
}

.table-card {
  height: 600px;
  margin-top: 14px;
  padding: 10px 7px;
}

.table-caption {
  height: 26px;
}

.clients {
  width: 100%;
  border-collapse: collapse;
  table-layout: fixed;
}

.clients th {
  height: 80px;
  padding: 6px 3px;
  border: 1px solid #dfe3f6;
  text-align: left;
  vertical-align: top;
}

.clients td {
  height: 47px;
  padding: 3px;
  border: 1px solid #dfe3f6;
  white-space: nowrap;
}

.clients .mid {
  text-align: center;
}

.c-num { width: 22px; }
.c-firm { width: 280px; }
.c-name { width: 194px; }
.c-type { width: 83px; }
.c-region { width: 128px; }
.c-date { width: 92px; }
.c-phone { width: 110px; }
.c-agent { width: 108px; }
.c-city { width: 85px; }
.c-lat,
.c-lng { width: 69px; }

/* modal */
.modal-backdrop {
  position: absolute;
  inset: 0;
  display: flex;
  padding: 24px 26px 23px;
  background-color: rgba(0, 0, 0, 0.5);
}

.modal {
  flex: 1;
  min-width: 0;
  display: flex;
  flex-direction: column;
  border-radius: 7px;
  background-color: #fff;
  color: #212529;
  overflow: hidden;
}

.modal-header {
  display: flex;
  align-items: center;
  gap: 6px;
  height: 53px;
  padding: 0 13px 0 14px;
  border-bottom: 1px solid #e9ecef;
}

.eye {
  width: 19px;
  height: 17px;
}

.modal-title {
  margin: 0;
  font-family: "Noto Sans", "Open Sans", sans-serif;
  font-size: 16px;
  font-weight: 500;
}

.modal-close {
  margin-left: auto;
}

.modal-close svg {
  width: 14px;
  height: 14px;
}

.modal-main {
  flex: 1;
  min-height: 0;
  display: flex;
}

.modal-body {
  flex: 1;
  min-width: 0;
  overflow: hidden;
  padding: 13px 13px 0 14px;
}

.nav-tabs {
  display: flex;
  height: 34px;
  border-bottom: 1px solid #dee2e6;
}

.nav-tab {
  gap: 3px;
  height: 34px;
  padding: 0 12px;
  border: 1px solid transparent;
  border-radius: 6px 6px 0 0;
  color: #0d6efd;
}

.nav-tab-active {
  border-color: #dee2e6 #dee2e6 #fff;
  background-color: #fff;
  color: #000;
}

.ic-clip {
  width: 11px;
  height: 13px;
}

.ic-scale {
  width: 17px;
  height: 14px;
}

.ic-map {
  width: 15px;
  height: 13px;
}

.tab-pane {
  padding: 20px 13px 0;
}

.section-title {
  display: flex;
  align-items: center;
  gap: 3px;
  margin: 0 0 6px;
  font-size: 13px;
  font-weight: 600;
}

.map {
  position: relative;
  height: 192px;
  border: 1px solid #e9ebee;
  border-radius: 7px;
  overflow: hidden;
  background-color: #f2efe9;
}

.map-tiles,
.map-labels {
  position: absolute;
  inset: 0;
  width: 100%;
  height: 100%;
}

.map-labels text {
  font-family: "Noto Sans", sans-serif;
  font-size: 9px;
  text-anchor: middle;
  fill: #444;
  paint-order: stroke;
  stroke: rgba(255, 255, 255, 0.6);
  stroke-width: 2px;
}

.map-labels .city {
  font-size: 11px;
}

.map-labels .district {
  font-style: italic;
  fill: #777;
}

.map-labels .region {
  text-anchor: start;
  fill: #9b6fa0;
}

.map-pin {
  position: absolute;
  left: 50%;
  top: 50%;
  width: 34px;
  height: 34px;
  margin: -34px 0 0 -11px;
}

.map-controls {
  position: absolute;
  left: 9px;
  top: 9px;
  display: flex;
  flex-direction: column;
  align-items: flex-start;
  gap: 9px;
}

.map-zoom {
  border: 1px solid #aaa;
  border-radius: 4px;
  background-color: #fff;
}

.map-zoom button {
  width: 25px;
  height: 25px;
}

.map-zoom button + button {
  border-top: 1px solid #ccc;
}

.map-zoom svg {
  width: 13px;
  height: 13px;
}

.map-layers {
  width: 37px;
  height: 37px;
  border-radius: 4px;
  background-color: #fff;
  box-shadow: 0 1px 4px rgba(0, 0, 0, 0.3);
}

.map-layers svg {
  width: 26px;
  height: 26px;
}

.map-credit {
  position: absolute;
  right: 0;
  bottom: 0;
  display: flex;
  align-items: center;
  gap: 3px;
  padding: 0 4px;
  background-color: rgba(255, 255, 255, 0.8);
  font-family: "Liberation Sans", Arial, sans-serif;
  font-size: 10px;
  line-height: 14px;
  color: #333;
}

.map-credit a {
  color: #0078a8;
  text-decoration: none;
}

.form-row {
  display: grid;
  grid-template-columns: 1fr 1fr;
  gap: 13px;
}

.map + .form-row {
  margin-top: 17px;
}

.field label {
  display: block;
  margin-bottom: 6px;
  color: #3c4045;
}

.input-group {
  display: flex;
  height: 32px;
  border: 1px solid #e5e7eb;
  border-radius: 6px;
  overflow: hidden;
}

.addon {
  display: flex;
  align-items: center;
  justify-content: center;
  width: 34px;
  border-right: 1px solid #e5e7eb;
  background-color: #f1f4ff;
}

.ic-globe {
  width: 14px;
  height: 14px;
}

.input-group input {
  flex: 1;
  min-width: 0;
  padding: 0 9px;
  border: none;
  outline: none;
  background-color: #fff;
  color: #3c4045;
}

.open-map {
  display: flex;
  gap: 2px;
  margin-top: 13px;
}

.open-label {
  padding-top: 2px;
  color: #3c4045;
}

.btn-group {
  display: flex;
}

.btn-map {
  gap: 3px;
  height: 26px;
  padding: 0 6px;
  border: 1px solid;
  font-size: 11px;
}

.btn-google {
  border-color: #dc3545;
  border-radius: 4px 0 0 4px;
  color: #dc3545;
}

.btn-yandex {
  margin-left: -1px;
  border-color: #ffc107;
  border-radius: 0 4px 4px 0;
  color: #ffc107;
  gap: 2px;
}

.ic-google {
  width: 12px;
  height: 12px;
}

.ic-yandex {
  width: 7px;
  height: 13px;
}

.divider {
  margin: 8px 0;
  border: none;
  border-top: 1px solid #d3d3d5;
}

.divider + .form-row label {
  margin-bottom: 5px;
}

.scrollbar {
  display: flex;
  flex-direction: column;
  align-items: center;
  width: 13px;
  padding: 4px 0;
  background-color: #fcfcfc;
}

.scroll-track {
  flex: 1;
  padding: 4px 0;
}

.scroll-thumb {
  width: 7px;
  height: 60%;
  border-radius: 4px;
  background-color: #858585;
}

.modal-footer {
  display: flex;
  align-items: center;
  justify-content: flex-end;
  gap: 7px;
  height: 59px;
  padding: 0 13px;
  border-top: 1px solid #e4e6e9;
}

.btn {
  gap: 4px;
  height: 32px;
  padding: 0 10px;
  border: 1px solid;
  border-radius: 5px;
  font-size: 12px;
}

.btn-outline {
  border-color: #3b89fd;
  color: #0d6efd;
}

.btn-secondary {
  border-color: #6c757d;
  background-color: #6c757d;
  color: #fff;
}

.ic-pen {
  width: 13px;
  height: 13px;
}

/* taskbar */
.taskbar {
  display: grid;
  grid-template-columns: 1fr auto 1fr;
  align-items: center;
  height: 40px;
  background-color: #efefef;
  font-size: 10px;
  line-height: 13px;
  color: #222;
}

.apps {
  grid-column: 2;
  display: flex;
  gap: 5px;
}

.app {
  position: relative;
  width: 32px;
  height: 34px;
  border-radius: 4px;
}

.app svg {
  width: 20px;
  height: 20px;
}

.app-open::after {
  content: "";
  position: absolute;
  bottom: 1px;
  width: 5px;
  height: 2px;
  border-radius: 1px;
  background-color: #888;
}

.app-current {
  background-color: #fde5e7;
}

.app-current::after {
  width: 13px;
  background-color: #c4201c;
}

.tray {
  display: flex;
  align-items: center;
  justify-content: flex-end;
  gap: 13px;
  padding-right: 17px;
}

.tray-icons {
  display: flex;
  gap: 5px;
}

.clock {
  display: flex;
  flex-direction: column;
  align-items: flex-end;
  font-size: 9px;
}

.badge {
  width: 13px;
  height: 13px;
  margin-left: -3px;
  border-radius: 50%;
  background-color: #0078d4;
  color: #fff;
  font-size: 9px;
  text-align: center;
}
```
